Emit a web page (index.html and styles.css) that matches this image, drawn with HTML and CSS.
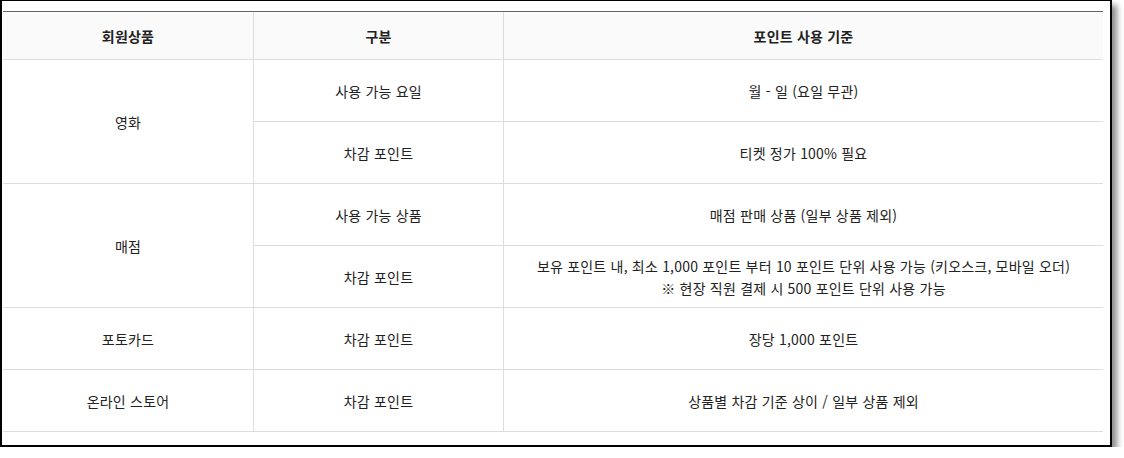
FILE: index.html
```html
<!DOCTYPE html>
<html lang="ko">
<head>
<meta charset="utf-8">
<link rel="stylesheet" href="styles.css">
</head>
<body>
<div class="frame">
  <div class="grid">
    <div class="cell head">회원상품</div>
    <div class="cell head mid">구분</div>
    <div class="cell head">포인트 사용 기준</div>

    <div class="cell span2">영화</div>
    <div class="cell mid">사용 가능 요일</div>
    <div class="cell">월 - 일 (요일 무관)</div>
    <div class="cell mid">차감 포인트</div>
    <div class="cell">티켓 정가 100% 필요</div>

    <div class="cell span2">매점</div>
    <div class="cell mid">사용 가능 상품</div>
    <div class="cell">매점 판매 상품 (일부 상품 제외)</div>
    <div class="cell mid">차감 포인트</div>
    <div class="cell two">보유 포인트 내, 최소 1,000 포인트 부터 10 포인트 단위 사용 가능 (키오스크, 모바일 오더)<br>※ 현장 직원 결제 시 500 포인트 단위 사용 가능</div>

    <div class="cell">포토카드</div>
    <div class="cell mid">차감 포인트</div>
    <div class="cell">장당 1,000 포인트</div>

    <div class="cell">온라인 스토어</div>
    <div class="cell mid">차감 포인트</div>
    <div class="cell">상품별 차감 기준 상이 / 일부 상품 제외</div>
  </div>
</div>
</body>
</html>
```
FILE: styles.css
```css
html, body {
  margin: 0;
  padding: 0;
  background: #fff;
}
body {
  font-family: "Noto Sans CJK KR", "Noto Sans", sans-serif;
  font-size: 14px;
  letter-spacing: 0.2px;
  color: #222;
}
.frame {
  box-sizing: content-box;
  width: 1100px;
  height: 434px;
  border-top: 1px solid #000;
  border-left: 2px solid #000;
  border-right: 2px solid #000;
  border-bottom: 2px solid #000;
  padding: 10px 7px 0 1px;
  box-shadow: 5px 5px 6px rgba(0, 0, 0, 0.45);
  background: #fff;
}
.grid {
  display: grid;
  grid-template-columns: 250px 251px 599px;
  grid-template-rows: 48px repeat(6, 62px);
  border-top: 1px solid #666;
}
.cell {
  display: flex;
  align-items: center;
  justify-content: center;
  text-align: center;
  border-bottom: 1px solid #ddd;
  line-height: 22px;
}
.mid {
  border-left: 1px solid #ddd;
  border-right: 1px solid #ddd;
}
.head {
  background: #fafafa;
  font-weight: bold;
}
.span2 {
  grid-row: span 2;
}
```
